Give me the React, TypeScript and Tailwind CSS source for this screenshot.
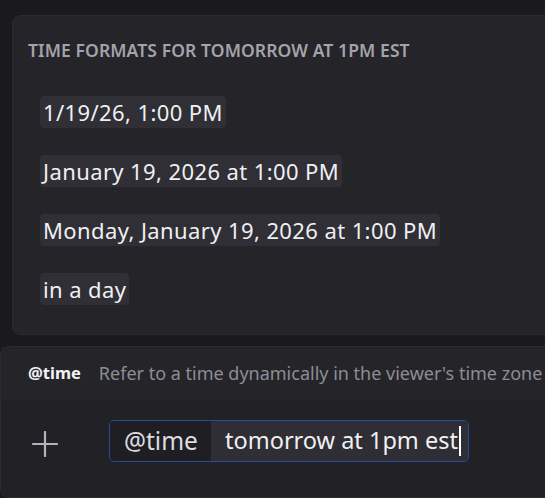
import React from "react";

const chips = [
  "1/19/26, 1:00 PM",
  "January 19, 2026 at 1:00 PM",
  "Monday, January 19, 2026 at 1:00 PM",
  "in a day",
];

export default function App() {
  return (
    <div
      className="w-[545px] h-[498px] overflow-hidden bg-[#1a1a1e] flex flex-col"
      style={{ fontFamily: '"Noto Sans", "Open Sans", sans-serif' }}
    >
      <div className="ml-[12px] mt-[15px] h-[320px] shrink-0 rounded-l-[9px] border border-r-0 border-[#2b2b30] bg-[#242429] pl-[15px] pt-[21px]">
        <div className="text-[17.5px] font-semibold leading-[26px] text-[#a3a3ab] tracking-[0.1px] whitespace-nowrap">
          TIME FORMATS FOR TOMORROW AT 1PM EST
        </div>
        <div className="mt-[33px] flex flex-col items-start gap-[27px] pl-[12px]">
          {chips.map((c) => (
            <div
              key={c}
              className="h-[32px] rounded-[4px] bg-[#2f2f35] px-[3px] text-[22px] leading-[32px] tracking-[0.4px] text-[#f0f0f2] whitespace-nowrap"
            >
              {c}
            </div>
          ))}
        </div>
      </div>
      <div className="mt-[11px] h-[152px] shrink-0 rounded-l-[9px] border border-r-0 border-[#2b2b30] bg-[#222226] flex flex-col">
        <div className="h-[52px] shrink-0 bg-[#252529] flex items-center pl-[27px] whitespace-nowrap">
          <span className="text-[16.5px] font-bold text-[#f2f2f4]">@time</span>
          <span className="ml-[18px] text-[18px] text-[#8d8d96]">
            Refer to a time dynamically in the viewer's time zone
          </span>
        </div>
        <div className="flex items-start h-[97px] pl-[31px]">
          <svg width="26" height="26" viewBox="0 0 26 26" className="shrink-0 mt-[32px]">
            <path d="M13 1V25M1 13H25" stroke="#b3b3ba" strokeWidth="2.2" strokeLinecap="round" />
          </svg>
          <div className="ml-[51px] mt-[21px] h-[42px] w-[360px] rounded-[5px] border border-[#1f4f9e] flex overflow-hidden">
            <div className="w-[101px] bg-[#1f1f23] flex items-center pl-[14px] text-[24.5px] text-[#dcdce0]">
              @time
            </div>
            <div className="flex-1 bg-[#2e2e34] flex items-center pl-[14px] text-[23.5px] text-[#f0f0f2] whitespace-nowrap">
              <span>tomorrow at 1pm est</span>
              <span className="ml-[1px] inline-block w-[2px] h-[30px] bg-white" />
            </div>
          </div>
        </div>
      </div>
    </div>
  );
}
